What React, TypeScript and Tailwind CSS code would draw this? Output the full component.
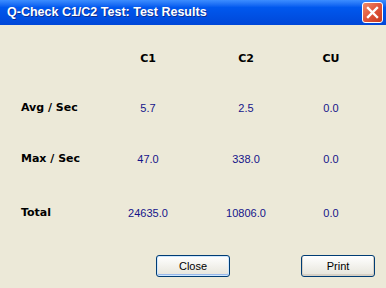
// Q-Check C1/C2 results dialog (XP style)

import React from 'react';

const rows = [
  { label: 'Avg / Sec', c1: '5.7', c2: '2.5', cu: '0.0', mt: 'mt-[25px]' },
  { label: 'Max / Sec', c1: '47.0', c2: '338.0', cu: '0.0', mt: 'mt-[27px]' },
  { label: 'Total', c1: '24635.0', c2: '10806.0', cu: '0.0', mt: 'mt-[30px]' },
];

const bold = "font-['DejaVu_Sans',sans-serif] font-bold text-[11px] text-black";
const value = "font-['Liberation_Sans',Arial,sans-serif] text-[11px] text-[#14148a] text-center";

const XpButton: React.FC<{ label: string; focused?: boolean }> = ({ label, focused }) => (
  <button
    className={
      'w-[74px] h-[22px] rounded-[3px] border border-[#003c74] bg-gradient-to-b from-white to-[#e6e4da] ' +
      "font-['Liberation_Sans',Arial,sans-serif] text-[11px] text-black flex items-center justify-center " +
      (focused ? 'shadow-[inset_0_0_0_1px_#cee7ff,inset_0_-1px_0_1px_#98b8ea]' : 'shadow-[inset_0_-1px_0_1px_#d6d0c5]')
    }
  >
    {label}
  </button>
);

export default function App() {
  return (
    <div className="w-[386px] h-[288px] bg-[#ece9d8] overflow-hidden flex flex-col">
      {/* Title bar */}
      <div className="h-[25px] shrink-0 flex items-center justify-between pl-[7px] pr-[3px] bg-gradient-to-b from-[#3c8dff] via-[#0058ee] via-30% to-[#0047d8]">
        <span className="font-['Liberation_Sans',Arial,sans-serif] font-bold text-[12.5px] text-white [text-shadow:1px_1px_0_#0c2d93]">
          Q-Check C1/C2 Test: Test Results
        </span>
        <div className="w-[21px] h-[21px] rounded-[3px] border border-white bg-gradient-to-br from-[#ef8a6a] via-[#e0543a] to-[#c53a1f] flex items-center justify-center">
          <svg width="13" height="13" viewBox="0 0 13 13">
            <path d="M2 2 L11 11 M11 2 L2 11" stroke="white" strokeWidth="2.4" strokeLinecap="square" />
          </svg>
        </div>
      </div>

      {/* Results table */}
      <div className="pl-[21px] pt-[22px]">
        <div className="grid grid-cols-[79px_96px_100px_70px] h-[24px] items-center">
          <span />
          <span className={bold + ' text-center'}>C1</span>
          <span className={bold + ' text-center'}>C2</span>
          <span className={bold + ' text-center'}>CU</span>
        </div>
        {rows.map((r) => (
          <div key={r.label} className={'grid grid-cols-[79px_96px_100px_70px] h-[24px] items-center ' + r.mt}>
            <span className={bold}>{r.label}</span>
            <span className={value}>{r.c1}</span>
            <span className={value}>{r.c2}</span>
            <span className={value}>{r.cu}</span>
          </div>
        ))}
      </div>

      {/* Buttons */}
      <div className="flex gap-[71px] pl-[156px] mt-[30px]">
        <XpButton label="Close" focused />
        <XpButton label="Print" />
      </div>
    </div>
  );
}
